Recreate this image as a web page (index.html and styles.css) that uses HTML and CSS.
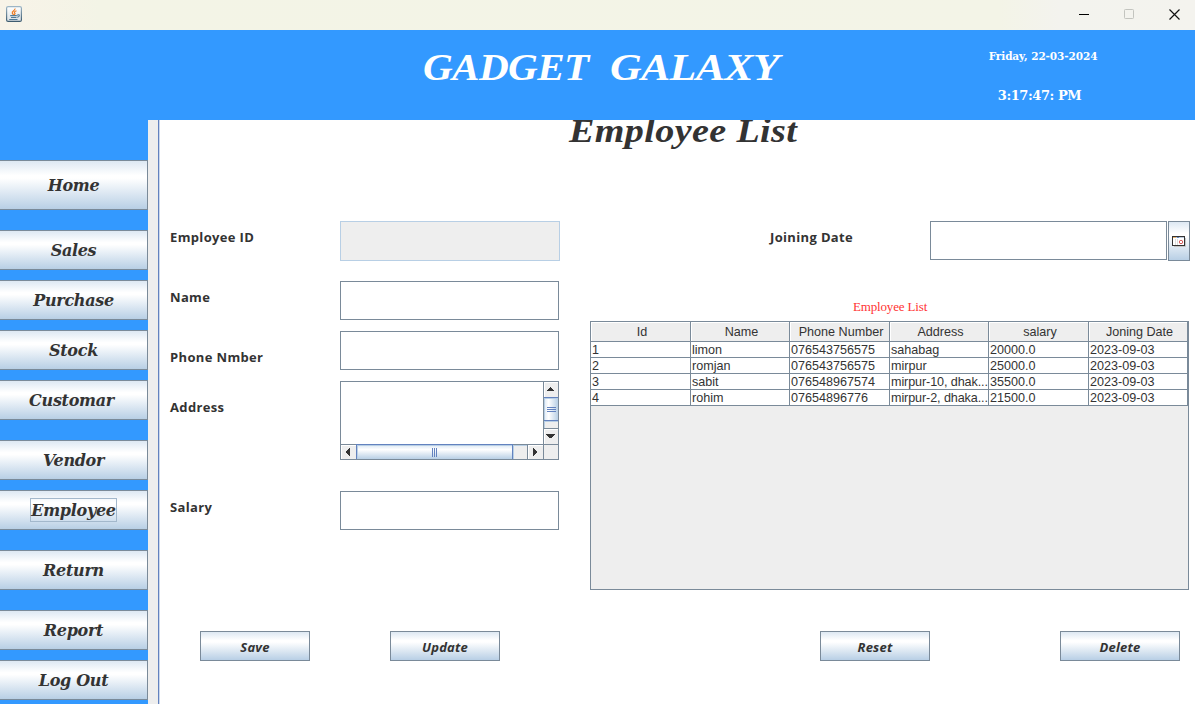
FILE: index.html
```html
<!DOCTYPE html>
<html lang="en">
<head>
<meta charset="utf-8">
<title>Gadget Galaxy</title>
<link rel="stylesheet" href="styles.css">
</head>
<body>
<div class="window">
  <div class="titlebar">
    <svg class="java" width="16" height="16" viewBox="0 0 16 16">
      <defs><linearGradient id="jg" x1="0" y1="0" x2="0" y2="1"><stop offset="0" stop-color="#fff"/><stop offset="1" stop-color="#d9e0e5"/></linearGradient>
      <linearGradient id="jb" x1="0" y1="0" x2="0" y2="1"><stop offset="0" stop-color="#9db5c5"/><stop offset="1" stop-color="#3e5c70"/></linearGradient></defs>
      <rect x=".6" y=".6" width="14.8" height="14.8" rx="1.5" fill="url(#jg)" stroke="url(#jb)" stroke-width="1.2"/>
      <path d="M9 2.5C9.5 4.5 5.5 5 6.3 7.2L7.5 9M10.5 4.8C8 5.7 8 6.5 9 7.5L8.3 9" fill="none" stroke="#ec7b21" stroke-width="1.2"/>
      <path d="M4.2 9.6h6.6M5 11.5h5.5M3.2 13.5h8.3M11 9.2c3-1.5 3.2 1.3.3 2.2" fill="none" stroke="#507b97" stroke-width="1.1"/>
    </svg>
    <div class="controls">
      <svg width="11" height="11" viewBox="0 0 11 11"><path d="M0 5.5h10" stroke="#000" fill="none"/></svg>
      <svg width="11" height="11" viewBox="0 0 11 11"><rect x=".5" y=".5" width="9" height="9" rx=".8" stroke="#c3c4bf" fill="none"/></svg>
      <svg width="11" height="11" viewBox="0 0 11 11"><path d="M.5.5l10 10M10.5.5l-10 10" stroke="#111" stroke-width="1.2" fill="none"/></svg>
    </div>
  </div>
  <header class="header">
    <h1 class="brand"><span class="word-a">GADGET</span><span class="word-b">GALAXY</span></h1>
    <div class="clock"><div class="date">Friday, 22-03-2024</div><div class="time">3:17:47: PM</div></div>
  </header>
  <div class="body">
    <nav class="sidebar">
      <button class="nav tall after-gap"><span>Home</span></button>
      <button class="nav"><span>Sales</span></button>
      <button class="nav"><span>Purchase</span></button>
      <button class="nav"><span>Stock</span></button>
      <button class="nav after-gap"><span class="shift">Customar</span></button>
      <button class="nav"><span>Vendor</span></button>
      <button class="nav after-gap focused"><span class="focus">Employee</span></button>
      <button class="nav after-gap"><span>Return</span></button>
      <button class="nav"><span>Report</span></button>
      <button class="nav"><span>Log Out</span></button>
    </nav>
    <div class="divider"></div>
    <main class="content">
      <h2 class="page-title"><span>Employee List</span></h2>
      <div class="columns">
        <section class="form">
          <div class="row gap20"><label>Employee ID</label><div class="field disabled"></div></div>
          <div class="row gap10"><label>Name</label><div class="field"></div></div>
          <div class="row gap10"><label class="low">Phone Nmber</label><div class="field"></div></div>
          <div class="row tall-row gap30"><label class="low">Address</label>
            <div class="area">
              <div class="area-text"></div>
              <div class="vbar">
                <div class="arrow"><svg width="7" height="4" viewBox="0 0 7 4" shape-rendering="crispEdges"><path d="M3 0h1v1h1v1h1v1h1v1H0V3h1V2h1V1h1z" fill="#333"/></svg></div>
                <div class="vthumb"><i></i><i></i><i></i></div>
                <div class="vtrack"></div>
                <div class="arrow down"><svg width="9" height="4" viewBox="0 0 9 4" shape-rendering="crispEdges"><path d="M0 0h9v1H8v1H7v1H6v1H3V3H2V2H1V1H0z" fill="#333"/></svg></div>
              </div>
              <div class="hbar">
                <div class="arrow left"><svg width="4" height="8" viewBox="0 0 4 8" shape-rendering="crispEdges"><path d="M4 0v8H3V7H2V6H1V5H0V3h1V2h1V1h1V0z" fill="#333"/></svg></div>
                <div class="hthumb"><i></i><i></i><i></i></div>
                <div class="htrack"></div>
                <div class="arrow right"><svg width="4" height="8" viewBox="0 0 4 8" shape-rendering="crispEdges"><path d="M0 0v8h1V7h1V6h1V5h1V3H3V2H2V1H1V0z" fill="#333"/></svg></div>
              </div>
              <div class="corner"></div>
            </div>
          </div>
          <div class="row"><label>Salary</label><div class="field"></div></div>
        </section>
        <section class="list">
          <div class="date-row"><label>Joining Date</label><div class="field date-field"></div>
            <button class="picker"><svg width="14" height="11" viewBox="0 0 14 11"><path d="M2 10.5h11.5V2" stroke="#c5c5c5" fill="none"/><rect x=".5" y=".5" width="12" height="9" fill="#fff" stroke="#333"/><path d="M1 1.5h11" stroke="#bcc9db"/><path d="M1 1.5h3" stroke="#e9b26c"/><path d="M5 1.5h2" stroke="#6485bb"/><path d="M3.5 3v6M5.5 3v6" stroke="#ddd"/><circle cx="9" cy="6" r="1.7" fill="#fff" stroke="#d75b5b"/></svg></button>
          </div>
          <div class="caption">Employee List</div>
          <div class="table-pane">
            <table>
              <colgroup><col class="c1"><col class="c2"><col class="c1"><col class="c2"><col class="c1"><col class="c2"></colgroup>
              <thead><tr><th>Id</th><th>Name</th><th>Phone Number</th><th>Address</th><th>salary</th><th>Joning Date</th></tr></thead>
              <tbody>
                <tr><td>1</td><td>limon</td><td>076543756575</td><td>sahabag</td><td>20000.0</td><td>2023-09-03</td></tr>
                <tr><td>2</td><td>romjan</td><td>076543756575</td><td>mirpur</td><td>25000.0</td><td>2023-09-03</td></tr>
                <tr><td>3</td><td>sabit</td><td>076548967574</td><td class="tight">mirpur-10, dhak...</td><td>35500.0</td><td>2023-09-03</td></tr>
                <tr><td>4</td><td>rohim</td><td>07654896776</td><td class="tight">mirpur-2, dhaka...</td><td>21500.0</td><td>2023-09-03</td></tr>
              </tbody>
            </table>
          </div>
        </section>
      </div>
      <div class="actions">
        <button class="action">Save</button><button class="action update">Update</button>
        <button class="action reset">Reset</button><button class="action delete">Delete</button>
      </div>
    </main>
  </div>
</div>
</body>
</html>
```
FILE: styles.css
```css
* { box-sizing: border-box; }
body { margin: 0; overflow: hidden; color: #333; font-family: "Liberation Sans", Arial, sans-serif; }
button { margin: 0; padding: 0; color: #333; border: 1px solid #7a8a99; border-radius: 0;
  background: linear-gradient(#dde8f3 0%, #fff 30%, #fff 36%, #b8cfe5 100%); }
h1, h2 { margin: 0; }
svg { display: block; }

.window { width: 1195px; height: 704px; display: flex; flex-direction: column; }
.titlebar { height: 30px; flex: none; display: flex; justify-content: space-between; align-items: flex-start;
  padding: 6px 15px 0 6px; background: linear-gradient(90deg, #f8f3e8 0, #f3f4e6 100px, #f3f4e7 1000px, #f3f3ee 1060px, #f4f3ee); }
.controls { display: flex; gap: 34px; padding-top: 3px; }

.header { height: 90px; flex: none; display: flex; background: #39f; color: #fff; }
.brand { width: 378px; margin-left: 423px; height: 76px; display: flex; font: italic bold 38px/74px "Liberation Serif", serif; white-space: nowrap; }
.word-a, .word-b { letter-spacing: -.6px; transform-origin: 0 50%; }
.word-a { width: 187px; transform: scaleX(1.085); }
.word-b { transform: scaleX(1.155); }
.clock { margin-left: 170px; width: 150px; text-align: center; font-family: "DejaVu Serif", serif; font-weight: bold; white-space: nowrap; }
.date { margin: 18px 0 0 -6px; font-size: 10.5px; line-height: 16px; letter-spacing: -.1px; }
.time { margin: 23px 0 0 -13px; font-size: 13px; line-height: 18px; letter-spacing: -.45px; }

.body { flex: 1; min-height: 0; display: flex; }
.sidebar { width: 148px; height: 584px; padding-top: 40px; background: #39f; display: flex; flex-direction: column; gap: 10px; overflow: hidden; }
.nav { flex: none; height: 40px; padding-top: 2px; border-left: 0; font: italic bold 16px/22px "DejaVu Serif", serif; letter-spacing: -.3px; }
.nav.tall { height: 50px; }
.nav.after-gap { margin-bottom: 10px; }
.nav.focused { padding-top: 0; }
.shift { margin-right: 4px; }
.focus { display: inline-block; width: 87px; height: 24px; line-height: 23px; border: 1px solid #a3b8cc; }
.divider { width: 12px; flex: none; background: #eee; border-right: 1px solid #ccd8ec; box-shadow: inset -1px 0 #6382bf; }

.content { flex: 1; height: 584px; overflow: hidden; background: #fff; }
.page-title { height: 101px; padding-left: 409px; font: italic bold 34px/22px "Liberation Serif", serif; white-space: nowrap; }
.page-title span { display: inline-block; letter-spacing: .35px; transform: scaleX(1.12); transform-origin: 0 50%; }
.columns { display: flex; height: 410px; padding-left: 10px; }
.form { width: 420px; }
.row { display: flex; align-items: flex-start; height: 40px; }
.tall-row { height: 80px; }
.gap10 { margin-bottom: 10px; }
.gap20 { margin-bottom: 20px; }
.gap30 { margin-bottom: 30px; }
label { width: 170px; font: bold 13px/32px "Open Sans", "Noto Sans", sans-serif; letter-spacing: .35px; white-space: nowrap; }
label.low { margin-top: 10px; }
.field { width: 219px; height: 39px; border: 1px solid #7a8a99; background: #fff; }
.field.disabled { width: 220px; height: 40px; background: #eee; border-color: #b8cfe5; }

.area { width: 219px; height: 79px; border: 1px solid #7a8a99; display: grid; grid-template-columns: 202px 15px; grid-template-rows: 62px 15px; background: #eee; }
.area-text { background: #fff; }
.vbar { border-left: 1px solid #7a8a99; display: flex; flex-direction: column; }
.arrow { flex: none; display: flex; align-items: center; justify-content: center; width: 15px; height: 15px; background: #eee; box-shadow: inset 1px 1px #fff; }
.vbar .arrow { width: 14px; padding: 0 2px 2px 0; }
.hbar .arrow { height: 14px; }
.vthumb { height: 24px; border: solid #6382bf; border-width: 1px 0; box-shadow: inset 1px 1px #b8cfe5; background: linear-gradient(90deg, #dde8f3, #fff 33%, #b8cfe5); display: flex; flex-direction: column; align-items: center; justify-content: center; gap: 1px; }
.vthumb i { width: 9px; height: 1px; background: #6382bf; }
.vtrack { height: 7px; box-shadow: inset 1px 1px #b8cfe5; }
.vbar .down { height: 16px; border-top: 1px solid #7a8a99; }
.hbar { border-top: 1px solid #7a8a99; display: flex; height: 15px; }
.hthumb { width: 157px; margin-top: -1px; height: 15px; border: 1px solid #6382bf; border-bottom: 0; background: linear-gradient(#dde8f3, #fff 33%, #b8cfe5); box-shadow: inset 1px 1px #b8cfe5; display: flex; align-items: center; justify-content: center; gap: 1px; }
.hthumb i { width: 1px; height: 9px; background: #6382bf; }
.htrack { width: 14px; box-shadow: inset 1px 1px #b8cfe5; }
.hbar .left { padding-right: 1px; }
.hbar .right { width: 16px; border-left: 1px solid #7a8a99; padding-right: 2px; }
.corner { border: solid #7a8a99; border-width: 1px 0 0 1px; }

.list { width: 600px; }
.date-row { display: flex; height: 77px; padding-left: 180px; }
.date-row label { width: 160px; }
.date-field { width: 237px; }
.picker { width: 22px; height: 40px; margin-left: 1px; display: flex; align-items: center; padding-left: 3px; }
.caption { height: 23px; color: #f33; text-align: center; font: 13px/18px "Liberation Serif", serif; letter-spacing: -.15px; }
.table-pane { width: 599px; height: 269px; border: 1px solid #7a8a99; background: #eee; }
table { width: 597px; border-collapse: separate; border-spacing: 0; table-layout: fixed; font-size: 12.6px; }
.c1 { width: 100px; }
.c2 { width: 99px; }
th, td { padding: 0; border: solid #7a8a99; border-width: 0 1px 1px 0; white-space: nowrap; overflow: hidden; }
th { height: 20px; font-weight: normal; line-height: 18px; padding: 1px 0 0 3px; background: #eee; box-shadow: inset 1px 1px #fff; }
td { height: 16px; line-height: 14px; padding: 1px 0 0 1px; background: #fff; }
td.tight { letter-spacing: -.1px; }

.actions { display: flex; padding-left: 40px; }
.action { width: 110px; height: 30px; padding-top: 2px; font: italic bold 13px/18px "Open Sans", "Noto Sans", sans-serif; letter-spacing: .2px; }
.update { margin-left: 80px; }
.reset { margin-left: 320px; }
.delete { width: 120px; margin-left: 130px; }
```
